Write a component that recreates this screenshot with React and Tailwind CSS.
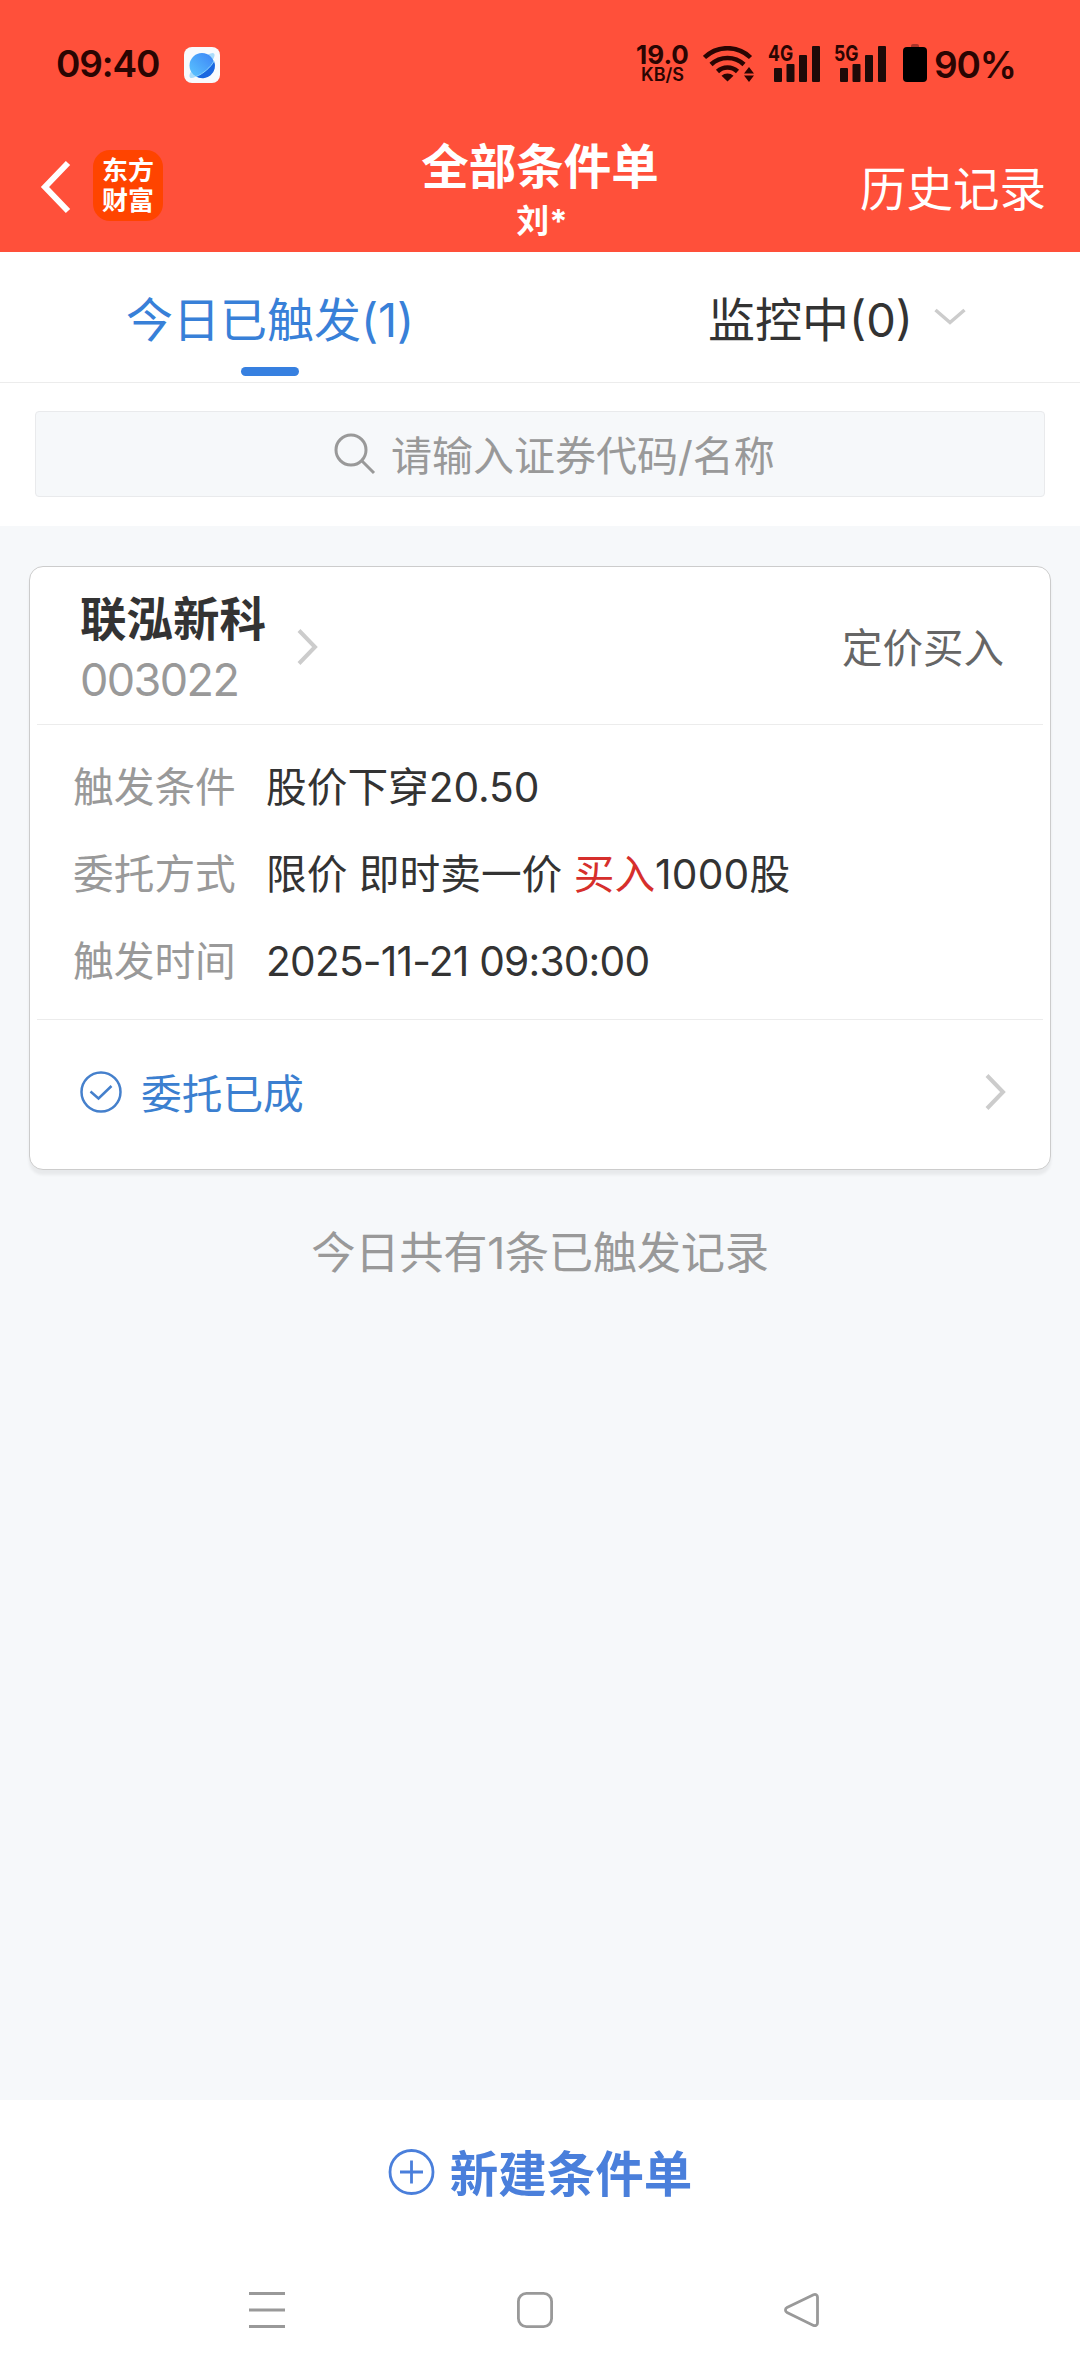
import React from 'react';

const rows = [
  { label: '触发条件', value: <>股价下穿<span className="tracking-[-0.1px]">20.50</span></> },
  {
    label: '委托方式',
    value: (
      <>
        限价 即时卖一价 <span className="text-[#d62f2c]">买入</span>
        <span className="tracking-[0.2px]">1000</span>股
      </>
    ),
  },
  { label: '触发时间', value: <span className="tracking-[-0.8px]">2025-11-21 09:30:00</span> },
];

function Signal({ label }) {
  return (
    <div className="relative">
      <svg width="52" height="38" viewBox="0 0 52 38" fill="#1f0a08">
        <rect x="6" y="24" width="8" height="14" rx="1" />
        <rect x="18.5" y="20" width="8" height="18" rx="1" />
        <rect x="31" y="11" width="8" height="27" rx="1" />
        <rect x="44" y="2" width="8" height="36" rx="1" />
      </svg>
      <span className="absolute top-[-3px] left-0 origin-left scale-x-[0.8] text-[22px] leading-[25px] font-bold">{label}</span>
    </div>
  );
}

function Wifi() {
  return (
    <svg width="51" height="36" viewBox="0 0 51 36" fill="none" stroke="#2a0502" strokeWidth="4.5">
      <path d="M1.500 11.500a33 33 0 0 1 46 0" />
      <path d="M8 18.500a24 24 0 0 1 33 0" />
      <path d="M14.500 25.500a14.500 14.500 0 0 1 20 0" />
      <path d="M24.500 35.500l-6-5.800a9 9 0 0 1 12 0z" fill="#2a0502" stroke="none" />
      <path d="M46 21l5 6.500H41zM46 36l5-6.500H41z" fill="#2a0502" stroke="none" />
    </svg>
  );
}

function StatusBar() {
  return (
    <div className="flex h-[126px] items-start pt-[44px] pl-[56px] text-[#2a0502]">
      <span className="mt-[1px] w-[128px] text-[37px] leading-[38px] font-semibold tracking-[-1.1px]">09:40</span>
      <svg className="mt-[3px]" width="36" height="36" viewBox="0 0 36 36">
        <defs>
          <linearGradient id="planet" x1="0" y1="1" x2="1" y2="0">
            <stop offset="0" stopColor="#5cc8ff" />
            <stop offset="1" stopColor="#3b82f6" />
          </linearGradient>
        </defs>
        <rect width="36" height="36" rx="8" fill="#f8fafd" />
        <ellipse cx="18" cy="18.500" rx="17" ry="5" fill="#a9dcfb" transform="rotate(-45 18 18.500)" />
        <circle cx="18" cy="18.500" r="12.500" fill="url(#planet)" />
        <path d="M30 14A12.500 12.500 0 0 1 12 29.500C19 27 27 20 30 14z" fill="#1a67e0" />
        <path d="M30 14C27 20 19 27 12 29.500" fill="none" stroke="#8fd8ff" />
      </svg>
      <div className="ml-[415px] flex w-[55px] flex-col items-center">
        <span className="text-[26px] leading-[22px] font-bold">19.0</span>
        <span className="text-[18px] leading-[18px] font-semibold">KB/S</span>
      </div>
      <div className="mt-[2px] ml-[13px]"><Wifi /></div>
      <div className="ml-[14px]"><Signal label="4G" /></div>
      <div className="ml-[14px]"><Signal label="5G" /></div>
      <svg className="ml-[17px]" width="24" height="38" viewBox="0 0 24 38">
        <rect x="8" width="8" height="6" rx="2" fill="#a8342a" />
        <rect y="3" width="24" height="35" rx="4" fill="#000" />
      </svg>
      <span className="mt-[2px] ml-[7px] text-[37px] leading-[38px] font-semibold tracking-[-1.2px]">90%</span>
    </div>
  );
}

function TitleBar() {
  return (
    <div className="grid h-[126px] grid-cols-3 text-white">
      <div className="flex items-start pt-[24px] pl-[40px]">
        <svg className="mt-[10px]" width="32" height="54" viewBox="0 0 32 54" fill="none" stroke="#fff" strokeWidth="6">
          <path d="M28 3L5 27l23 24" />
        </svg>
        <div className="ml-[21px] flex h-[71px] w-[70px] flex-col items-center justify-center rounded-[17px] bg-[#ff4400] text-[26px] leading-[30px] font-bold">
          <span>东方</span>
          <span>财富</span>
        </div>
      </div>
      <div className="flex flex-col items-center pt-[13px]">
        <span className="text-[47.5px] leading-[56px] font-bold">全部条件单</span>
        <span className="mt-[8px] ml-[4px] text-[33px] leading-[36px] font-bold">刘*</span>
      </div>
      <div className="pt-[35px] pr-[34px] text-right text-[46.5px] leading-[56px]">历史记录</div>
    </div>
  );
}

function Tabs() {
  return (
    <div className="grid h-[131px] grid-cols-2 border-b border-[#ececec] text-[47px] leading-[56px]">
      <div className="flex flex-col items-center pt-[40px] text-[#3880d8]">
        <span>今日已触发<span className="tracking-[-0.2px]">(1)</span></span>
        <span className="mt-[19px] h-[9px] w-[58px] rounded-full bg-[#3780e0]" />
      </div>
      <div className="flex items-start pt-[40px] pl-[168px] text-[#333]">
        <span>监控中(0)</span>
        <svg className="mt-[16px] ml-[21px]" width="32" height="18" viewBox="0 0 32 18" fill="none" stroke="#ccc" strokeWidth="3.500">
          <path d="M1.500 2L16 14.500 30.500 2" />
        </svg>
      </div>
    </div>
  );
}

function SearchBox() {
  return (
    <div className="px-[35px] pt-[28px] pb-[29px]">
      <div className="flex h-[86px] items-center rounded-[4px] border border-[#e9eaec] bg-[#f6f8fa] pl-[298px] text-[#999]">
        <svg width="42" height="42" viewBox="0 0 42 42" fill="none" stroke="#999" strokeWidth="3">
          <circle cx="17" cy="17" r="15" />
          <path d="M27.500 27.500L40 40" />
        </svg>
        <span className="mt-[3px] ml-[15px] text-[41px] leading-[48px]">请输入证券代码/名称</span>
      </div>
    </div>
  );
}

function Chevron() {
  return (
    <svg width="22" height="38" viewBox="0 0 22 38" fill="none" stroke="#ccc" strokeWidth="4">
      <path d="M2 2.500L18 19 2 35.500" />
    </svg>
  );
}

function OrderCard() {
  return (
    <div className="mx-[29px] h-[604px] rounded-[14px] border border-[#ccc] bg-white px-[7px] shadow-[0_5px_3px_rgba(0,0,0,0.06)]">
      <div className="flex h-[158px] items-start border-b border-[#ececec] pl-[43px]">
        <div className="flex w-[217px] flex-col pt-[24px]">
          <span className="text-[46.5px] leading-[56px] font-bold text-[#333]">联泓新科</span>
          <span className="mt-[5px] text-[45px] leading-[56px] tracking-[-1.6px] text-[#999]">003022</span>
        </div>
        <div className="pt-[61px]"><Chevron /></div>
        <span className="mt-[57px] mr-[39px] ml-auto text-[40.5px] leading-[50px] text-[#666]">定价买入</span>
      </div>
      <div className="flex h-[295px] flex-col border-b border-[#ececec] pt-[19px] pl-[36px] text-[40.7px] leading-[87px]">
        {rows.map((row) => (
          <div key={row.label} className="flex">
            <span className="w-[193px] text-[#999]">{row.label}</span>
            <span className="text-[#333]">{row.value}</span>
          </div>
        ))}
      </div>
      <div className="flex items-start pt-[51px] pr-[36px] pl-[43px]">
        <svg width="42" height="42" viewBox="0 0 42 42" fill="none" stroke="#4580cc" strokeWidth="2.500">
          <circle cx="21" cy="21" r="19.500" />
          <path d="M10.500 20.500l8 7L31.500 15" />
        </svg>
        <span className="ml-[19px] text-[40.7px] leading-[48px] text-[#3b7fd0]">委托已成</span>
        <span className="mt-[2px] ml-auto"><Chevron /></span>
      </div>
    </div>
  );
}

function NavBar() {
  return (
    <div className="flex h-[84px] items-start text-[#999]">
      <svg className="ml-[249px]" width="36" height="36" viewBox="0 0 36 36" fill="currentColor">
        <rect width="36" height="3" />
        <rect y="16.500" width="36" height="3" />
        <rect y="33" width="36" height="3" />
      </svg>
      <svg className="ml-[232px]" width="36" height="36" viewBox="0 0 36 36" fill="none" stroke="currentColor" strokeWidth="2.800">
        <rect x="1.400" y="1.400" width="33.200" height="33.200" rx="8" />
      </svg>
      <svg className="ml-[231px]" width="36" height="36" viewBox="0 0 36 36" fill="none" stroke="currentColor" strokeWidth="2.800">
        <path d="M29.500 2.800L3 15.500a2.800 2.800 0 0 0 0 5L29.500 33.400c2 .8 4-.2 4-2.400V5c0-2.200-2-3.100-4-2.200z" />
      </svg>
    </div>
  );
}

export default function App() {
  return (
    <div className="flex h-[2376px] w-[1080px] flex-col overflow-hidden bg-[#f6f8fa] font-['Inter','Noto_Sans_CJK_SC',sans-serif] whitespace-nowrap">
      <header className="bg-[#ff503a]">
        <StatusBar />
        <TitleBar />
      </header>
      <div className="bg-white">
        <Tabs />
        <SearchBox />
      </div>
      <main className="flex-1 pt-[40px]">
        <OrderCard />
        <p className="mt-[55px] text-center text-[44.3px] leading-[56px] tracking-[-0.3px] text-[#999]">今日共有1条已触发记录</p>
      </main>
      <footer className="bg-white">
        <div className="flex h-[192px] items-start justify-center pt-[48px] text-[#4a7fdb]">
          <svg width="48" height="48" viewBox="0 0 48 48" fill="none" stroke="currentColor" strokeWidth="2.800">
            <circle cx="23.500" cy="24" r="21.500" />
            <path d="M23.500 12.500v23M12 24h23" />
          </svg>
          <span className="mt-[-1px] ml-[14px] text-[48.5px] leading-[56px] font-bold">新建条件单</span>
        </div>
        <NavBar />
      </footer>
    </div>
  );
}
